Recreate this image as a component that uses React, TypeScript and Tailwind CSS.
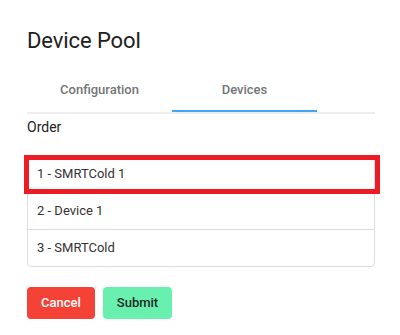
import React from "react";

export default function App() {
  const items = ["1 - SMRTCold 1", "2 - Device 1", "3 - SMRTCold"];
  return (
    <div
      className="w-[400px] h-[335px] bg-white pl-[27px] pr-[25px] pt-[25px] text-[#212121]"
      style={{ fontFamily: "Roboto, 'Liberation Sans', sans-serif" }}
    >
      <h1 className="text-[22px] leading-8 font-normal tracking-[-0.1px] text-[#212121]">Device Pool</h1>

      <div className="mt-[10px] border-b-2 border-[#eeeeee]">
        <div className="flex w-[290px]">
          <div className="w-[145px] h-[45px] flex items-center justify-center text-[13px] font-medium text-[#757575]">
            Configuration
          </div>
          <div className="relative w-[145px] h-[45px] flex items-center justify-center text-[13px] font-medium text-[#757575]">
            Devices
            <div className="absolute left-0 right-0 bottom-0 h-[2px] bg-[#42a5f5]" />
          </div>
        </div>
      </div>

      <div className="text-[14px] leading-6 mt-[1px] text-[#212121]">Order</div>

      <div className="relative mt-[16px] border border-[#dddddd] rounded-[4px]">
        {items.map((t, i) => (
          <div
            key={t}
            className={
              "px-[9px] py-2 text-[13px] leading-5 text-[#333333]" +
              (i > 0 ? " border-t border-[#dddddd]" : "")
            }
          >
            {t}
          </div>
        ))}
        <div className="absolute left-[-4px] top-[-1px] w-[356px] h-[39px] border-[5px] border-[#ed1c24]" />
      </div>

      <div className="flex gap-2 mt-[20px]">
        <button className="w-[68px] h-[32px] rounded-[4px] bg-[#f44336] text-white text-[13px] font-medium">
          Cancel
        </button>
        <button className="w-[69px] h-[32px] rounded-[4px] bg-[#69f0ae] text-[#1f2a24] text-[13px] font-medium">
          Submit
        </button>
      </div>
    </div>
  );
}
